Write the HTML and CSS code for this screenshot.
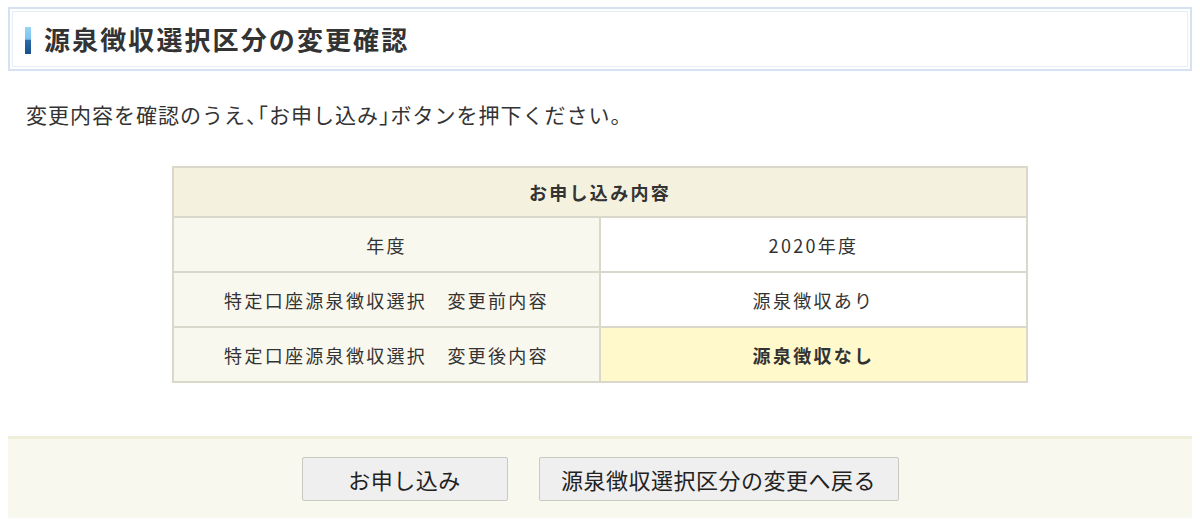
FILE: index.html
```html
<!DOCTYPE html>
<html lang="ja">
<head>
<meta charset="utf-8">
<title>源泉徴収選択区分の変更確認</title>
<link rel="stylesheet" href="styles.css">
</head>
<body>
<div class="page">
  <div class="title-box">
    <div class="title-inner">
      <span class="title-bar"></span>
      <h1 class="title">源泉徴収選択区分の変更確認</h1>
    </div>
  </div>

  <p class="lead">変更内容を確認のうえ<span class="half">、「</span>お申し込み<span class="half">」</span>ボタンを押下ください。</p>

  <table class="confirm">
    <thead>
      <tr><th colspan="2" class="head">お申し込み内容</th></tr>
    </thead>
    <tbody>
      <tr><td class="label">年度</td><td class="value">2020年度</td></tr>
      <tr><td class="label">特定口座源泉徴収選択　変更前内容</td><td class="value">源泉徴収あり</td></tr>
      <tr><td class="label">特定口座源泉徴収選択　変更後内容</td><td class="value changed">源泉徴収なし</td></tr>
    </tbody>
  </table>

  <div class="actions">
    <button class="btn btn-apply" type="button">お申し込み</button>
    <button class="btn btn-back" type="button">源泉徴収選択区分の変更へ戻る</button>
  </div>
</div>
</body>
</html>
```

FILE: styles.css
```css
html, body {
  margin: 0;
  padding: 0;
  background: #ffffff;
}
body {
  font-family: "Noto Sans CJK JP", "Noto Sans", sans-serif;
  color: #333333;
}
.page {
  padding: 7px 8px 0;
}
.title-box {
  border: 2px solid #d6e1f1;
  padding: 2px;
}
.title-inner {
  border: 1px solid #e7eef8;
  height: 54px;
  display: flex;
  align-items: center;
  padding-left: 12px;
}
.title-bar {
  width: 6px;
  height: 27px;
  background: linear-gradient(to bottom, #9ad4f6 0%, #7cc2ee 45%, #2a6aa8 50%, #174f8c 100%);
  margin-right: 13px;
  margin-top: 2px;
}
.title {
  margin: 0;
  font-size: 26px;
  font-weight: bold;
  letter-spacing: 2.1px;
  color: #333333;
  line-height: 1;
}
.lead {
  margin: 28px 0 0;
  padding-left: 18px;
  font-size: 21px;
  letter-spacing: 1px;
  line-height: 31px;
  color: #333333;
}
.lead .half {
  font-feature-settings: "halt";
}
.confirm {
  margin: 36px auto 0;
  width: 856px;
  border-collapse: collapse;
  table-layout: fixed;
}
.confirm th, .confirm td {
  border: 2px solid #d9d8ca;
  text-align: center;
  font-size: 18px;
  letter-spacing: 2.3px;
  color: #333333;
  padding: 0;
}
.confirm .head {
  background: #f4f2df;
  font-weight: bold;
  height: 48px;
}
.confirm td {
  height: 53px;
}
.confirm .label {
  background: #f9f8ee;
  width: 50%;
}
.confirm .value {
  background: #ffffff;
}
.confirm .value.changed {
  background: #fff9cc;
  font-weight: bold;
}
.actions {
  margin-top: 53px;
  border-top: 3px solid #efefd9;
  background: #f8f8ee;
  display: flex;
  justify-content: center;
  align-items: flex-start;
  gap: 31px;
  padding-top: 18px;
  box-sizing: border-box;
  height: 82px;
}
.btn {
  height: 44px;
  border: 1px solid #c9c9c4;
  border-radius: 2px;
  background: #efefef;
  font-family: "Noto Sans CJK JP", "Noto Sans", sans-serif;
  font-size: 22px;
  letter-spacing: 0.5px;
  color: #222222;
  padding: 0;
  cursor: pointer;
}
.btn-apply {
  width: 206px;
}
.btn-back {
  width: 360px;
}
```
